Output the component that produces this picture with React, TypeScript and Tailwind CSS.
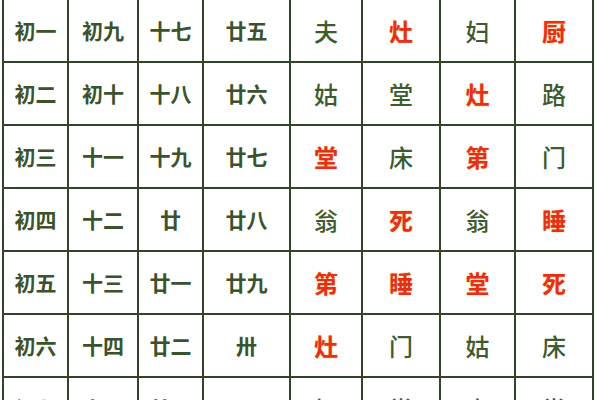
const ROWS = [
    { days: ['初一', '初九', '十七', '廿五'], marks: ['夫', '灶', '妇', '厨'] },
    { days: ['初二', '初十', '十八', '廿六'], marks: ['姑', '堂', '灶', '路'] },
    { days: ['初三', '十一', '十九', '廿七'], marks: ['堂', '床', '第', '门'] },
    { days: ['初四', '十二', '廿', '廿八'], marks: ['翁', '死', '翁', '睡'] },
    { days: ['初五', '十三', '廿一', '廿九'], marks: ['第', '睡', '堂', '死'] },
    { days: ['初六', '十四', '廿二', '卅'], marks: ['灶', '门', '姑', '床'] },
    { days: ['初七', '十五', '廿三', ''], marks: ['妇', '堂', '夫', '堂'] },
];

// characters printed in red
const RED = new Set(['灶', '厨', '堂', '第', '死', '睡']);
const GREEN_STAY = [
    [true, false, true, false],
    [true, true, false, true],
    [false, true, false, true],
    [true, false, true, false],
    [false, false, false, false],
    [false, true, true, true],
    [true, true, true, true],
];

export default function App() {
    return (
        <div
            className="w-[600px] h-[400px] overflow-hidden bg-white pl-[2px]"
            style={{ fontFamily: '"Noto Sans CJK SC", "Noto Sans", sans-serif' }}
        >
            <div className="grid w-[592px] grid-cols-[63px_68px_63px_85px_70px_76px_73px_76px] auto-rows-[61px] gap-[2px] bg-[#33432b] px-[2px] pb-[2px]">
                {ROWS.map((row, r) => (
                    <Row key={r} days={row.days} marks={row.marks} green={GREEN_STAY[r]} />
                ))}
            </div>
        </div>
    );
}

function Row({ days, marks, green }: { days: string[]; marks: string[]; green: boolean[] }) {
    return (
        <>
            {days.map((d, i) => (
                <div
                    key={'d' + i}
                    className="flex items-center justify-center bg-white text-[21px] font-bold text-[#3a532c]"
                >
                    {d}
                </div>
            ))}
            {marks.map((m, i) => {
                const red = RED.has(m) && !green[i];
                return (
                    <div key={'m' + i} className="flex items-center justify-center bg-white">
                        <span
                            className={
                                red
                                    ? 'text-[24px] font-semibold text-[#e4301a] [text-shadow:0_0_2px_#f7c46a]'
                                    : 'text-[24px] font-medium text-[#3e5b2e]'
                            }
                        >
                            {m}
                        </span>
                    </div>
                );
            })}
        </>
    );
}
